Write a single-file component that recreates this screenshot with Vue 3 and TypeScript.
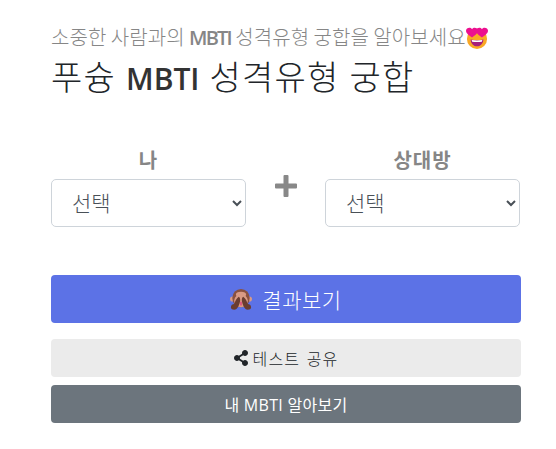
<script setup lang="ts">
import { ref } from 'vue'

const me = ref('')
const other = ref('')

const types = ['ISTJ', 'ISFJ', 'INFJ', 'INTJ', 'ISTP', 'ISFP', 'INFP', 'INTP', 'ESTP', 'ESFP', 'ENFP', 'ENTP', 'ESTJ', 'ESFJ', 'ENFJ', 'ENTJ']
</script>

<template>
  <div class="page">
    <p class="lead">소중한 사람과의 <b>MBTI</b> 성격유형 궁합을 알아보세요<svg class="emoji-eyes" viewBox="0 0 24 24" aria-hidden="true">
        <circle cx="12" cy="13" r="11" fill="#f9a825" />
        <path d="M5 13.500c4.500 1.200 9.500 1.200 14 0-.4 4.800-3.300 7.500-7 7.500s-6.600-2.700-7-7.500z" fill="#a51f7c" />
        <path d="M6.200 14.300c3.700.7 7.900.7 11.600 0l-.5 1.800c-3.500.5-7.100.5-10.600 0z" fill="#fff" />
        <path d="M6.600 11.500C3.800 9.500 0 7.200 0 4.200 0 .8 4.800-.4 6.600 2.400 8.400-.4 13 .8 13 4.200c0 3-3.600 5.300-6.400 7.300z" fill="#ec0f8f" />
        <path d="M17.400 11.500c-2.800-2-6.400-4.300-6.400-7.300 0-3.400 4.600-4.600 6.400-1.800C19.200-.4 24 .8 24 4.200c0 3-3.800 5.300-6.600 7.300z" fill="#ec0f8f" />
      </svg></p>
    <h1 class="title">푸슝 <b>MBTI</b> 성격유형 궁합</h1>

    <div class="pick-row">
      <div class="pick">
        <label class="pick-label" for="me">나</label>
        <select id="me" v-model="me" class="pick-select">
          <option value="">선택</option>
          <option v-for="t in types" :key="t" :value="t">{{ t }}</option>
        </select>
      </div>
      <span class="plus">
        <svg viewBox="0 0 22 22" width="22" height="22" aria-hidden="true">
          <path d="M8.500 1a1 1 0 0 1 1-1h3a1 1 0 0 1 1 1v7.500H21a1 1 0 0 1 1 1v3a1 1 0 0 1-1 1h-7.500V21a1 1 0 0 1-1 1h-3a1 1 0 0 1-1-1v-7.500H1a1 1 0 0 1-1-1v-3a1 1 0 0 1 1-1h7.500z" fill="#888" />
        </svg>
      </span>
      <div class="pick">
        <label class="pick-label" for="other">상대방</label>
        <select id="other" v-model="other" class="pick-select">
          <option value="">선택</option>
          <option v-for="t in types" :key="t" :value="t">{{ t }}</option>
        </select>
      </div>
    </div>

    <button class="btn btn-main" type="button">
      <svg class="emoji-monkey" viewBox="0 0 24 24" aria-hidden="true">
        <circle cx="2.800" cy="12" r="2.800" fill="#d99a85" />
        <circle cx="21.200" cy="12" r="2.800" fill="#d99a85" />
        <ellipse cx="12" cy="11" rx="9.500" ry="10" fill="#8a5140" />
        <ellipse cx="12" cy="14" rx="7.500" ry="7" fill="#d99a85" />
        <ellipse cx="12" cy="7" rx="5.500" ry="3" fill="#d99a85" />
        <path d="M11.200 15h1.600v4h-1.600z" fill="#e0407f" />
        <path d="M1 21c0-2.500 2-3.500 3.500-3.500 1-2.500 2.500-6.500 5-8 1.500.5 1.800 3 1.500 5-.5 3-2 6.500-4 8.500-1.500 1.300-6 1-6-2z" fill="#6b3d30" />
        <path d="M23 21c0-2.500-2-3.500-3.500-3.500-1-2.500-2.500-6.500-5-8-1.500.5-1.800 3-1.500 5 .5 3 2 6.500 4 8.500 1.500 1.300 6 1 6-2z" fill="#6b3d30" />
      </svg>
      <span class="main-text">결과보기</span>
    </button>
    <button class="btn btn-share" type="button">
      <svg class="share-icon" viewBox="0 0 448 512" aria-hidden="true">
        <path d="M352 320c-22.600 0-43.400 7.800-59.800 20.900l-102.500-64.100a96.600 96.600 0 0 0 0-41.700l102.500-64.100C308.600 184.200 329.400 192 352 192c53 0 96-43 96-96S405 0 352 0s-96 43-96 96c0 7.200.8 14.100 2.300 20.800l-102.500 64.100C139.400 167.800 118.600 160 96 160c-53 0-96 43-96 96s43 96 96 96c22.600 0 43.400-7.800 59.800-20.900l102.500 64.100A96.300 96.300 0 0 0 256 416c0 53 43 96 96 96s96-43 96-96-43-96-96-96z" fill="#212529" />
      </svg>
      <span class="share-text">테스트 공유</span>
    </button>
    <button class="btn btn-about" type="button">내 MBTI 알아보기</button>
  </div>
</template>

<style scoped>
.page {
  width: 470px;
  margin-left: 51px;
  padding-top: 23px;
  font-family: "Open Sans", "Noto Sans CJK KR", sans-serif;
  color: #212529;
}

.lead {
  margin: 0;
  height: 31px;
  line-height: 30px;
  font-size: 20px;
  font-weight: 300;
  letter-spacing: 0.1px;
  color: #868686;
  word-spacing: -1px;
  white-space: nowrap;
}

.lead b {
  font-weight: 600;
  letter-spacing: -1.8px;
}

.emoji-eyes {
  width: 22px;
  height: 22px;
  vertical-align: -4px;
}

.title {
  margin: 0;
  font-size: 34px;
  line-height: 46px;
  font-weight: 300;
  letter-spacing: 1.2px;
  color: #212529;
  white-space: nowrap;
}

.title b {
  font-size: 30px;
  font-weight: 600;
  letter-spacing: 0;
  color: #333;
}

.pick-row {
  width: 469px;
  margin-top: 42px;
  display: flex;
  justify-content: space-between;
  align-items: center;
}

.pick {
  width: 195px;
  display: flex;
  flex-direction: column;
  align-items: center;
}

.pick-label {
  height: 33px;
  margin-bottom: 2px;
  line-height: 33px;
  font-size: 20px;
  font-weight: 700;
  letter-spacing: 1px;
  color: #868686;
}

.pick-select {
  width: 100%;
  height: 48px;
  padding: 0 10px 0 16px;
  font-family: inherit;
  font-size: 21px;
  font-weight: 300;
  color: #495057;
  background: #fff;
  border: 1px solid #ced4da;
  border-radius: 5px;
}

.plus {
  display: flex;
  margin-top: 1px;
}

.btn {
  display: flex;
  align-items: center;
  justify-content: center;
  width: 100%;
  border: 0;
  border-radius: 4px;
  font-family: inherit;
}

.btn-main {
  height: 48px;
  margin-top: 48px;
  gap: 10px;
  font-size: 21px;
  font-weight: 300;
  color: #fff;
  background: #5c72e6;
}

.main-text {
  letter-spacing: 0.5px;
}

.emoji-monkey {
  width: 22px;
  height: 22px;
}

.btn-share {
  height: 38px;
  margin-top: 16px;
  gap: 5px;
  font-size: 16px;
  font-weight: 300;
  color: #212529;
  background: #ebebeb;
}

.share-text {
  letter-spacing: 1.2px;
  word-spacing: 1px;
}

.share-icon {
  width: 14px;
  height: 16px;
}

.btn-about {
  height: 38px;
  margin-top: 8px;
  font-size: 16px;
  letter-spacing: 0.3px;
  color: #fff;
  background: #6c757d;
}
</style>
